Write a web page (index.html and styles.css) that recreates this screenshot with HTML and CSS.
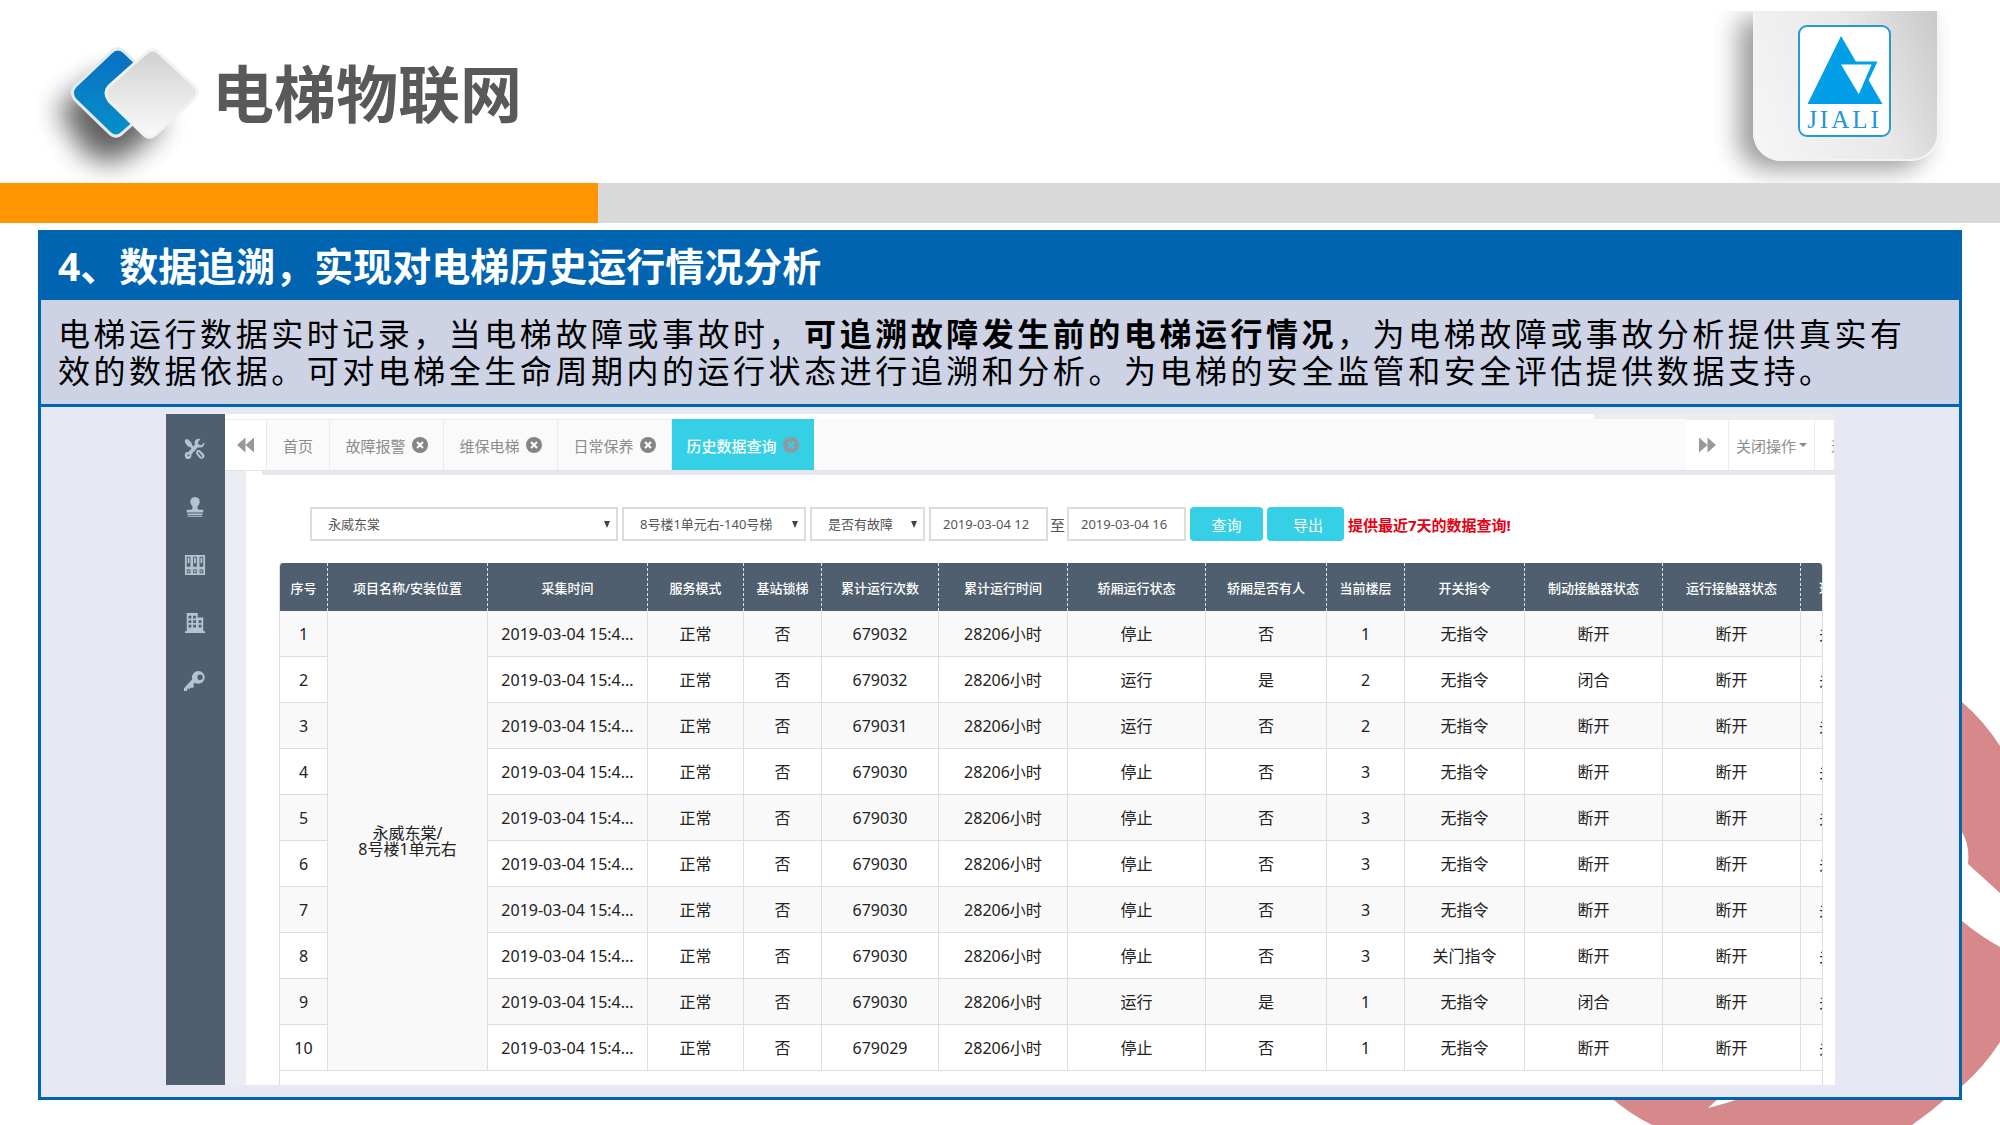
FILE: index.html
```html
<!DOCTYPE html>
<html lang="zh-CN">
<head>
<meta charset="utf-8">
<meta name="viewport" content="width=device-width, initial-scale=1">
<title>电梯物联网</title>
<link rel="stylesheet" href="styles.css">
</head>
<body>
<svg class="backdrop" viewBox="0 0 400 430" aria-hidden="true">
  <path d="M362 7Q384 26 400 51V198L368 169Q370 150 362 137Z"/>
  <path d="M362 226Q380 241 400 252V347Q384 372 362 391Z"/>
  <path d="M8 400H350Q332 416 312 430H52Q28 418 8 400Z"/>
  <path class="backdrop-notch" d="M122 400L108 413Q128 408 144 402V400Z"/>
</svg>

<header class="masthead">
  <svg class="mark" viewBox="0 0 214 183" aria-hidden="true">
    <defs>
      <filter id="soft" x="-50%" y="-50%" width="200%" height="200%"><feGaussianBlur stdDeviation="14"/></filter>
      <linearGradient id="blue" x1="0" y1="0" x2="0" y2="1"><stop offset="0" stop-color="#0a6fc2"/><stop offset="1" stop-color="#0590c8"/></linearGradient>
      <linearGradient id="silver" x1="0" y1="0" x2="0" y2="1"><stop offset="0" stop-color="#cfcfcf"/><stop offset=".5" stop-color="#e6e6e6"/><stop offset="1" stop-color="#fafafa"/></linearGradient>
    </defs>
    <path d="M58 108L108 72L166 126L124 160Q104 166 86 154Z" fill="#000" opacity=".62" filter="url(#soft)"/>
    <path d="M112 52Q119 45 126 52L161 86Q167 93 161 100L124 133Q117 140 110 133L76 100Q70 93 76 86Z" fill="url(#blue)" stroke="#e4eaee" stroke-width="3"/>
    <path d="M147 53Q154 46 161 53L196 86Q202 92 196 99L158 134Q151 141 144 134L110 101Q104 93 110 86Z" fill="url(#silver)" stroke="#f2f2f2" stroke-width="3"/>
  </svg>
  <h1 class="page-title">电梯物联网</h1>
  <div class="brand">
    <div class="brand-plate">
      <div class="brand-logo">
        <svg class="brand-icon" viewBox="0 0 76 69" aria-hidden="true">
          <path fill="#009fe8" d="M34 0L49 26H71L62 45L76 69H0Z"/>
          <path fill="#fff" d="M34 29H65L52 59Z"/>
        </svg>
        <span class="brand-name">JIALI</span>
      </div>
    </div>
  </div>
</header>
<div class="stripe"></div>

<main class="card">
  <h2 class="card-title">4、数据追溯，实现对电梯历史运行情况分析</h2>
  <p class="card-text"><span class="line">电梯运行数据实时记录，当电梯故障或事故时，<strong>可追溯故障发生前的电梯运行情况</strong>，为电梯故障或事故分析提供真实有</span><span class="line line-short">效的数据依据。可对电梯全生命周期内的运行状态进行追溯和分析。为电梯的安全监管和安全评估提供数据支持。</span></p>

  <div class="stage">
    <div class="app">
      <nav class="side" aria-label="功能">
        <a href="#" aria-label="维修"><svg viewBox="0 0 24 24"><path d="M1 2l3-1 4 4 1 3 4 4-2 2-4-4-3-1-3-4z"/><path fill-rule="evenodd" d="M14 13l3 0 5 5q1 3-1 4t-4 0l-4-5zM15 16l4 5 1-1-4-5z"/><path d="M22 5l-3 3-3-1-1-2 3-4q-4-1-6 2-1 2 0 4l-7 8q-3 0-4 2-1 3 1 5t5 0q2-2 1-4l7-8q4 1 6-1t1-5zM4 18h2v2H4z" fill-rule="evenodd"/></svg></a>
        <a href="#" aria-label="人员"><svg viewBox="0 0 24 24"><path d="M12 1a5 5 0 0 1 5 6q0 2-2 4-1 3 1 4h5v3H3v-3h5q2-1 1-4-2-2-2-4a5 5 0 0 1 5-6z"/><path d="M4 19h16v2H4zM4 22h16v1H4z"/></svg></a>
        <a href="#" aria-label="档案"><svg viewBox="0 0 24 24"><path fill-rule="evenodd" d="M1 1h22v22H1zM3 3v11h4V3zM10 3v11h4V3zM17 3v11h4V3zM3 17v4h4v-4zM10 17v4h4v-4zM17 17v4h4v-4z"/><path d="M4 4h2v6H4zM11 4h2v6h-2zM18 4h2v6h-2zM4 18h2v2H4zM11 18h2v2h-2zM18 18h2v2h-2z"/></svg></a>
        <a href="#" aria-label="楼宇"><svg viewBox="0 0 24 24"><path fill-rule="evenodd" d="M3 1h12v5h6v15h2v2H1v-2h2zM5 4v3h3V4zM10 4v3h3V4zM5 9v3h3V9zM10 9v3h3V9zM5 14v3h3v-3zM10 14v3h3v-3zM16 9v3h3V9zM16 14v3h3v-3z"/></svg></a>
        <a href="#" aria-label="权限"><svg viewBox="0 0 24 24"><path fill-rule="evenodd" d="M16 1a7 7 0 1 1-4 13l-2 2 1 2-2 2-2-1-1 2-2-1-1 3H0v-3l9-10A7 7 0 0 1 16 1zm1 4a3 3 0 1 0 1 6 3 3 0 0 0-1-6z"/></svg></a>
      </nav>

      <div class="workspace">
        <div class="tabs">
          <button class="tab tab-plain" type="button" aria-label="向左"><svg class="skip" viewBox="0 0 18 16"><path d="M9 0v16L0 8zM18 0v16L9 8z"/></svg></button>
          <a class="tab tab-home" href="#">首页</a>
          <a class="tab" href="#">故障报警<svg class="close" viewBox="0 0 16 16"><circle cx="8" cy="8" r="8"/><path d="M5 5l6 6M11 5l-6 6"/></svg></a>
          <a class="tab" href="#">维保电梯<svg class="close" viewBox="0 0 16 16"><circle cx="8" cy="8" r="8"/><path d="M5 5l6 6M11 5l-6 6"/></svg></a>
          <a class="tab" href="#">日常保养<svg class="close" viewBox="0 0 16 16"><circle cx="8" cy="8" r="8"/><path d="M5 5l6 6M11 5l-6 6"/></svg></a>
          <a class="tab tab-active" href="#" aria-current="page">历史数据查询<svg class="close" viewBox="0 0 16 16"><circle cx="8" cy="8" r="8"/><path d="M5 5l6 6M11 5l-6 6"/></svg></a>
          <button class="tab tab-plain tab-next" type="button" aria-label="向右"><svg class="skip" viewBox="0 0 18 16"><path d="M0 0v16l9-8zM9 0v16l9-8z"/></svg></button>
          <button class="tab tab-plain tab-ops" type="button">关闭操作<span class="caret"></span></button>
          <button class="tab tab-plain tab-exit" type="button">退出</button>
        </div>

        <div class="content">
          <form class="filters">
            <div class="select select-project"><select aria-label="项目"><option>永威东棠</option></select></div>
            <div class="select select-lift"><select aria-label="电梯"><option>8号楼1单元右-140号梯</option></select></div>
            <div class="select select-fault"><select aria-label="故障"><option>是否有故障</option></select></div>
            <div class="range">
              <input type="text" value="2019-03-04 12" aria-label="开始时间">
              <span>至</span>
              <input type="text" value="2019-03-04 16" aria-label="结束时间">
            </div>
            <button class="btn" type="button">查询</button>
            <button class="btn btn-export" type="button">导出</button>
            <strong class="hint">提供最近7天的数据查询!</strong>
          </form>

          <div class="grid">
            <table>
              <colgroup><col class="w-no"><col class="w-site"><col class="w-site"><col class="w-mode"><col class="w-lock"><col class="w-count"><col class="w-hours"><col class="w-state"><col class="w-people"><col class="w-floor"><col class="w-cmd"><col class="w-state"><col class="w-state"><col></colgroup>
              <thead>
                <tr><th>序号</th><th>项目名称/安装位置</th><th>采集时间</th><th>服务模式</th><th>基站锁梯</th><th>累计运行次数</th><th>累计运行时间</th><th>轿厢运行状态</th><th>轿厢是否有人</th><th>当前楼层</th><th>开关指令</th><th>制动接触器状态</th><th>运行接触器状态</th><th class="cut">现</th></tr>
              </thead>
              <tbody>
                <tr><td>1</td><td class="site" rowspan="10">永威东棠/<br>8号楼1单元右</td><td>2019-03-04 15:4...</td><td>正常</td><td>否</td><td>679032</td><td>28206小时</td><td>停止</td><td>否</td><td>1</td><td>无指令</td><td>断开</td><td>断开</td><td class="cut">关</td></tr>
                <tr><td>2</td><td>2019-03-04 15:4...</td><td>正常</td><td>否</td><td>679032</td><td>28206小时</td><td>运行</td><td>是</td><td>2</td><td>无指令</td><td>闭合</td><td>断开</td><td class="cut">关</td></tr>
                <tr><td>3</td><td>2019-03-04 15:4...</td><td>正常</td><td>否</td><td>679031</td><td>28206小时</td><td>运行</td><td>否</td><td>2</td><td>无指令</td><td>断开</td><td>断开</td><td class="cut">关</td></tr>
                <tr><td>4</td><td>2019-03-04 15:4...</td><td>正常</td><td>否</td><td>679030</td><td>28206小时</td><td>停止</td><td>否</td><td>3</td><td>无指令</td><td>断开</td><td>断开</td><td class="cut">关</td></tr>
                <tr><td>5</td><td>2019-03-04 15:4...</td><td>正常</td><td>否</td><td>679030</td><td>28206小时</td><td>停止</td><td>否</td><td>3</td><td>无指令</td><td>断开</td><td>断开</td><td class="cut">关</td></tr>
                <tr><td>6</td><td>2019-03-04 15:4...</td><td>正常</td><td>否</td><td>679030</td><td>28206小时</td><td>停止</td><td>否</td><td>3</td><td>无指令</td><td>断开</td><td>断开</td><td class="cut">关</td></tr>
                <tr><td>7</td><td>2019-03-04 15:4...</td><td>正常</td><td>否</td><td>679030</td><td>28206小时</td><td>停止</td><td>否</td><td>3</td><td>无指令</td><td>断开</td><td>断开</td><td class="cut">关</td></tr>
                <tr><td>8</td><td>2019-03-04 15:4...</td><td>正常</td><td>否</td><td>679030</td><td>28206小时</td><td>停止</td><td>否</td><td>3</td><td>关门指令</td><td>断开</td><td>断开</td><td class="cut">关</td></tr>
                <tr><td>9</td><td>2019-03-04 15:4...</td><td>正常</td><td>否</td><td>679030</td><td>28206小时</td><td>运行</td><td>是</td><td>1</td><td>无指令</td><td>闭合</td><td>断开</td><td class="cut">关</td></tr>
                <tr><td>10</td><td>2019-03-04 15:4...</td><td>正常</td><td>否</td><td>679029</td><td>28206小时</td><td>停止</td><td>否</td><td>1</td><td>无指令</td><td>断开</td><td>断开</td><td class="cut">关</td></tr>
              </tbody>
            </table>
          </div>
        </div>
      </div>
    </div>
  </div>
</main>
</body>
</html>
```
FILE: styles.css
```css
*,
*::before,
*::after {
  box-sizing: border-box;
}

body {
  position: relative;
  margin: 0;
  padding-bottom: 25px;
  background: #fff;
  color: #222;
  font-family: "Noto Sans", "Noto Sans CJK SC", sans-serif;
  overflow-x: hidden;
}

a {
  color: inherit;
  text-decoration: none;
}

button,
select,
input {
  margin: 0;
  font: inherit;
  color: inherit;
}

.backdrop {
  position: absolute;
  right: 0;
  bottom: 0;
  width: 400px;
  height: 430px;
  z-index: -1;
  fill: #d6888a;
}

.backdrop-notch {
  fill: #fff;
}

/* Masthead */
.masthead {
  display: flex;
  align-items: center;
  height: 183px;
}

.mark {
  width: 212px;
  height: 183px;
}

.page-title {
  flex: 1;
  margin: 0;
  padding-top: 4px;
  font-size: 62px;
  line-height: 80px;
  color: #595959;
}

.brand {
  align-self: flex-start;
  margin-top: 11px;
  padding: 0 61px 22px 60px;
  overflow: hidden;
}

.brand-plate {
  width: 186px;
  height: 150px;
  padding: 14px 0 0 43px;
  border: solid #f3f3f3;
  border-width: 0 2px 2px;
  border-radius: 0 0 28px 28px;
  background: linear-gradient(250deg, #c9c9c9 0%, #e8e8e8 40%, #f6f6f6 100%);
  box-shadow: -14px 8px 26px rgba(0, 0, 0, 0.4);
}

.brand-logo {
  display: flex;
  flex-direction: column;
  align-items: center;
  width: 93px;
  height: 112px;
  padding-top: 9px;
  border: 2px solid #2a98d4;
  border-radius: 9px;
  background: #fff;
}

.brand-icon {
  width: 76px;
  height: 69px;
}

.brand-name {
  font-family: "Liberation Serif", serif;
  font-size: 25px;
  line-height: 31px;
  letter-spacing: 3px;
  color: #1f97d6;
}

.stripe {
  height: 40px;
  background: linear-gradient(90deg, #ff9500 598px, #d9d9d9 598px);
}

/* Card */
.card {
  margin: 7px 38px 0;
  border: 3px solid #0064b0;
  background: #e6e9f3;
}

.card-title {
  margin: 0;
  padding: 0 17px 2px;
  background: #0064b0;
  color: #fff;
  font-size: 39px;
  line-height: 65px;
}

.card-text {
  margin: 0;
  padding: 15px 54px 15px 17px;
  border-bottom: 3px solid #0064b0;
  background: #cdd3e5;
  color: #000;
  font-size: 32px;
  line-height: 37px;
}

.line {
  display: block;
  letter-spacing: 3px;
  text-align: justify;
  text-align-last: justify;
}

.line-short {
  padding-right: 71px;
}

.stage {
  padding: 7px 124px 12px 125px;
}

/* Application window */
.app {
  display: flex;
  overflow: hidden;
  background: #fff;
}

.side {
  display: flex;
  flex-direction: column;
  flex: 0 0 59px;
  align-items: center;
  gap: 36px;
  padding: 24px 2px 0 0;
  background: #4f5f6f;
}

.side svg {
  display: block;
  width: 22px;
  height: 22px;
  fill: #b4c3cf;
}

.workspace {
  flex: 1;
  min-width: 0;
  background: #ecedf2;
}

.tabs {
  display: flex;
  height: 57px;
  padding-top: 5px;
  border-bottom: 1px solid #e2e3e8;
  background: linear-gradient(90deg, #fff 85%, #ededed 85%) 0 0 / 100% 5px no-repeat #fafafa;
  color: #8c8c8c;
  font-size: 15px;
  overflow: hidden;
}

.tab {
  display: flex;
  flex: 0 0 114px;
  align-items: center;
  justify-content: center;
  gap: 6px;
  border: solid #ebebeb;
  border-width: 1px 1px 0 0;
  white-space: nowrap;
}

.tab-plain {
  flex-basis: 43px;
  padding: 0;
  background: #fff;
}

.tab-plain:first-child {
  flex-basis: 42px;
}

.tab-home {
  flex-basis: 63px;
}

.tab-active {
  flex-basis: 142px;
  border-color: #36d0e6;
  background: #36d0e6;
  color: #fff;
  font-weight: 500;
}

.tab-next {
  margin-left: auto;
}

.tab-ops {
  flex-basis: 86px;
  gap: 3px;
}

.tab-exit {
  flex-basis: 20px;
  justify-content: flex-start;
  padding-left: 16px;
  overflow: hidden;
}

.skip {
  width: 17px;
  height: 16px;
  fill: #999;
}

.close {
  width: 16px;
  height: 16px;
  fill: #858585;
  stroke: #fff;
  stroke-width: 2;
}

.close circle {
  stroke: none;
}

.tab-active .close {
  fill: #8f9aa0;
  stroke: #36d0e6;
}

.caret {
  border: 4px solid transparent;
  border-top-color: #888;
  border-bottom-width: 0;
}

.content {
  margin-left: 21px;
  padding-top: 4px;
  background: linear-gradient(#e7e8ee, #e7e8ee) 16px 0 / 100% 4px no-repeat #fff;
}

/* Filters */
.filters {
  display: flex;
  align-items: center;
  gap: 4px;
  padding: 32px 0 22px 64px;
  color: #555;
  font-size: 13px;
}

.select {
  display: grid;
  align-items: center;
}

.select::after {
  content: "";
  grid-area: 1 / 1;
  justify-self: end;
  margin-right: 8px;
  border: 3px solid transparent;
  border-top: 7px solid #444;
  border-bottom-width: 0;
  pointer-events: none;
}

.select select {
  grid-area: 1 / 1;
  width: 100%;
  height: 34px;
  padding: 0 16px;
  border: 2px solid #dcdcdc;
  border-radius: 0;
  background: #fff;
  appearance: none;
}

.select-project {
  width: 308px;
}

.select-lift {
  width: 184px;
}

.select-fault {
  width: 115px;
}

.range {
  display: flex;
  align-items: center;
  font-size: 14px;
}

.range input {
  width: 119px;
  height: 34px;
  padding: 0 10px 0 12px;
  border: 2px solid #dcdcdc;
}

.range span {
  width: 19px;
  font-size: 15px;
  text-align: center;
}

.range input {
  font-size: 13px;
}

.btn {
  width: 73px;
  height: 34px;
  padding: 0;
  border: 0;
  border-radius: 4px;
  background: #36d0e6;
  color: #fff;
  font-size: 15px;
}

.btn-export {
  width: 77px;
  padding-left: 5px;
}

.hint {
  color: #e60012;
  font-size: 15px;
}

/* Records */
.grid {
  margin: 0 12px 0 33px;
  padding-bottom: 14px;
  border: solid #dedede;
  border-width: 0 1px;
  border-radius: 4px 4px 0 0;
  overflow: hidden;
}

table {
  width: 100%;
  table-layout: fixed;
  border-collapse: separate;
  border-spacing: 0;
}

.w-no { width: 48px; }
.w-site { width: 160px; }
.w-mode { width: 96px; }
.w-lock { width: 78px; }
.w-count { width: 117px; }
.w-hours { width: 129px; }
.w-state { width: 138px; }
.w-people { width: 121px; }
.w-floor { width: 78px; }
.w-cmd { width: 120px; }

th {
  height: 48px;
  padding: 0;
  border-right: 1px dashed #dfe4e8;
  background: #4f5f6f;
  color: #fff;
  font-size: 13px;
  font-weight: 500;
  white-space: nowrap;
}

td {
  height: 46px;
  padding: 0;
  border: solid #dedede;
  border-width: 0 1px 1px 0;
  font-size: 16px;
  line-height: 16px;
  text-align: center;
  white-space: nowrap;
}

tbody tr:nth-child(odd) td,
.site {
  background: #f9f9f9;
}

.cut {
  padding-left: 18px;
  border-right: 0;
  overflow: hidden;
  text-align: left;
}
```
